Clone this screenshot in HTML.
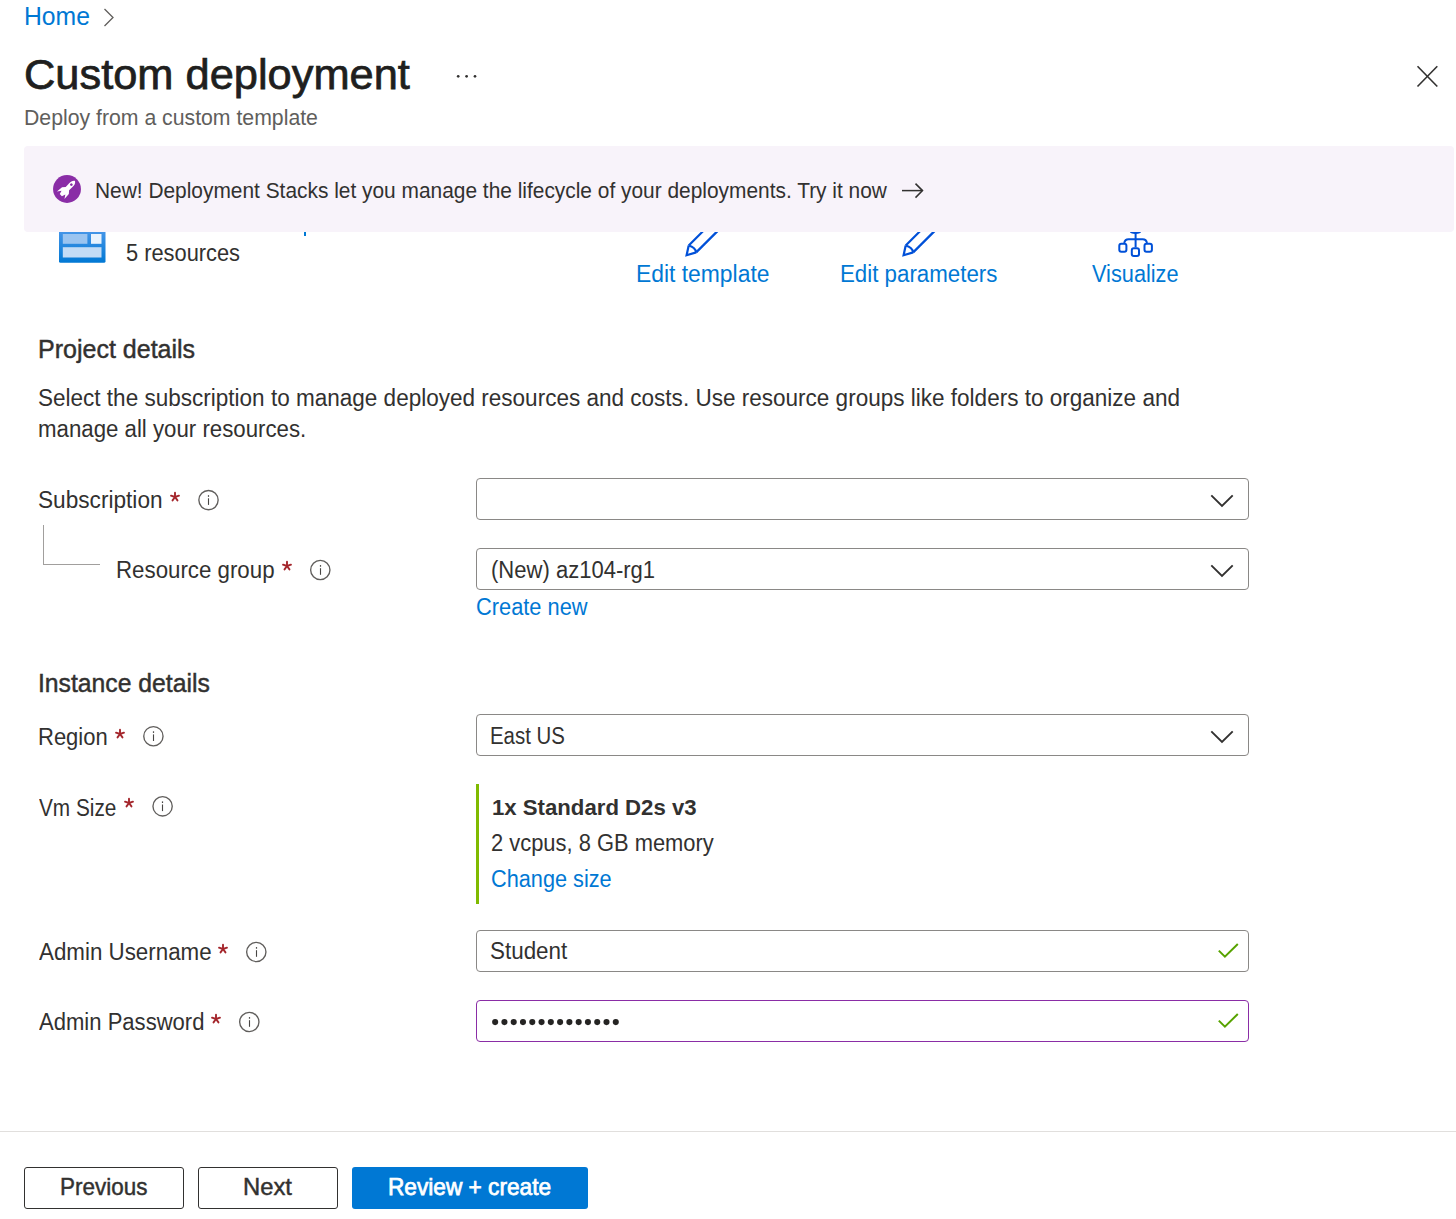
<!DOCTYPE html>
<html><head><meta charset="utf-8"><title>Custom deployment</title>
<style>
html,body{margin:0;padding:0;background:#fff;width:1456px;height:1219px;overflow:hidden;position:relative;font-family:"Liberation Sans",sans-serif;}
.t{position:absolute;white-space:nowrap;line-height:1;transform-origin:0 0;}
.ic{position:absolute;overflow:visible;}
.box{position:absolute;box-sizing:border-box;border:1px solid #8a8886;border-radius:4px;background:#fff;}
.btn{position:absolute;box-sizing:border-box;border:1px solid #323130;border-radius:3px;background:#fff;}
</style></head><body>
<!-- breadcrumb chevron -->
<svg class="ic" style="left:100px;top:5px" width="18" height="24" viewBox="0 0 18 24"><polyline points="4.5,4 13,12.5 4.5,21" fill="none" stroke="#605e5c" stroke-width="1.3"/></svg>
<!-- ellipsis -->
<svg class="ic" style="left:454px;top:70px" width="26" height="12" viewBox="0 0 26 12"><circle cx="4.2" cy="6.3" r="1.35" fill="#323130"/><circle cx="12.6" cy="6.3" r="1.35" fill="#323130"/><circle cx="21" cy="6.3" r="1.35" fill="#323130"/></svg>
<!-- close -->
<svg class="ic" style="left:1412px;top:61px" width="30" height="30" viewBox="0 0 30 30"><line x1="5.5" y1="5.3" x2="25.3" y2="25.5" stroke="#323130" stroke-width="1.6"/><line x1="25.3" y1="5.3" x2="5.5" y2="25.5" stroke="#323130" stroke-width="1.6"/></svg>

<!-- content behind banner -->
<div style="position:absolute;left:304px;top:232px;width:2.2px;height:3.8px;background:#0078d4"></div>
<svg class="ic" style="left:59px;top:220px" width="47" height="43" viewBox="0 0 47 43">
<defs><linearGradient id="resgrad" x1="0" y1="0" x2="0" y2="1"><stop offset="0" stop-color="#5ea0ef"/><stop offset="1" stop-color="#0078d4"/></linearGradient></defs>
<rect x="0" y="0" width="46.5" height="42.8" rx="1.6" fill="url(#resgrad)"/>
<rect x="3.8" y="14" width="24.6" height="9.8" fill="#9ac4f0"/>
<rect x="32" y="14" width="10.5" height="9.8" fill="#e9f3fd"/>
<rect x="3.8" y="27.2" width="38.7" height="10.3" fill="#c3dcf6"/>
</svg>
<!-- pencils -->
<svg class="ic" style="left:681px;top:214px" width="50" height="46" viewBox="0 0 50 46"><g fill="none" stroke="#0050d8" stroke-width="2.2" stroke-linejoin="miter">
<path d="M7.7,31.5 L36,3.2 M15.2,38.4 L43.5,10.1"/><path d="M7.7,31.5 L5.6,41.2 L15.2,38.4"/><path d="M7.7,31.5 Q14.3,33.2 15.2,38.4"/></g></svg>
<svg class="ic" style="left:898px;top:214px" width="50" height="46" viewBox="0 0 50 46"><g fill="none" stroke="#0050d8" stroke-width="2.2" stroke-linejoin="miter">
<path d="M7.7,31.5 L36,3.2 M15.2,38.4 L43.5,10.1"/><path d="M7.7,31.5 L5.6,41.2 L15.2,38.4"/><path d="M7.7,31.5 Q14.3,33.2 15.2,38.4"/></g></svg>
<!-- visualize -->
<svg class="ic" style="left:1112px;top:222px" width="48" height="40" viewBox="0 0 48 40"><path d="M17.6,9.6 L29.3,9.6 Q29,12 23.5,12.1 Q18,12 17.6,9.6 Z" fill="#0050d8"/><g fill="none" stroke="#0050d8" stroke-width="2" stroke-linejoin="round">
<path d="M23.6,11 L23.6,25.4"/><path d="M12.2,21 Q13,17.3 16.5,17.3 L30.7,17.3 Q34.2,17.3 35,21"/>
<rect x="7.3" y="21.8" width="7.1" height="7.9" rx="2"/><rect x="32.5" y="21.8" width="7.4" height="7.9" rx="2"/><rect x="19.8" y="26.2" width="7.2" height="7.8" rx="2"/></g></svg>

<!-- banner -->
<div style="position:absolute;left:24px;top:146px;width:1430px;height:86px;background:#f8f3fa;border-radius:4px;"></div>
<svg class="ic" style="left:53px;top:175px" width="28" height="28" viewBox="0 0 28 28"><circle cx="14" cy="14" r="13.95" fill="#8a2da6"/>
<g transform="translate(13,15) rotate(45)"><path d="M0,-12.8 C1.9,-11.5 2.6,-9.5 2.5,-7 L2.4,-2 L4.8,0.8 L5.3,7.5 L2.7,3.6 L1.5,7.3 L-1.5,7.3 L-2.7,3.6 L-5.3,7.5 L-4.8,0.8 L-2.4,-2 L-2.5,-7 C-2.6,-9.5 -1.9,-11.5 0,-12.8 Z" fill="#fff"/><circle cx="0" cy="-7.6" r="1.35" fill="#8a2da6"/></g></svg>
<svg class="ic" style="left:900px;top:180px" width="26" height="20" viewBox="0 0 26 20"><g fill="none" stroke="#323130" stroke-width="1.5"><path d="M2,10.6 L22.5,10.6"/><path d="M15.5,3.6 L22.5,10.6 L15.5,17.6"/></g></svg>

<!-- tree line -->
<div style="position:absolute;left:43px;top:525px;width:1px;height:40px;background:#a19f9d"></div>
<div style="position:absolute;left:43px;top:564px;width:57px;height:1px;background:#a19f9d"></div>

<!-- inputs -->
<div class="box" style="left:476px;top:478px;width:773px;height:42px"></div>
<div class="box" style="left:476px;top:548px;width:773px;height:42px"></div>
<div class="box" style="left:476px;top:714px;width:773px;height:42px"></div>
<div style="position:absolute;left:476px;top:784px;width:3px;height:120px;background:#7fba00"></div>
<div class="box" style="left:476px;top:930px;width:773px;height:42px"></div>
<div class="box" style="left:476px;top:1000px;width:773px;height:42px;border-color:#8a2da6"></div>
<svg class="ic" style="left:488px;top:1014px" width="140" height="16" viewBox="0 0 140 16"><circle cx="7.15" cy="8.1" r="3.05" fill="#252423"/><circle cx="16.43" cy="8.1" r="3.05" fill="#252423"/><circle cx="25.71" cy="8.1" r="3.05" fill="#252423"/><circle cx="34.99" cy="8.1" r="3.05" fill="#252423"/><circle cx="44.27" cy="8.1" r="3.05" fill="#252423"/><circle cx="53.55" cy="8.1" r="3.05" fill="#252423"/><circle cx="62.83" cy="8.1" r="3.05" fill="#252423"/><circle cx="72.11" cy="8.1" r="3.05" fill="#252423"/><circle cx="81.39" cy="8.1" r="3.05" fill="#252423"/><circle cx="90.67" cy="8.1" r="3.05" fill="#252423"/><circle cx="99.95" cy="8.1" r="3.05" fill="#252423"/><circle cx="109.23" cy="8.1" r="3.05" fill="#252423"/><circle cx="118.51" cy="8.1" r="3.05" fill="#252423"/><circle cx="127.79" cy="8.1" r="3.05" fill="#252423"/></svg>

<!-- footer -->
<div style="position:absolute;left:0;top:1131px;width:1456px;height:1px;background:#e1dfdd"></div>
<div class="btn" style="left:24px;top:1167px;width:160px;height:42px"></div>
<div class="btn" style="left:198px;top:1167px;width:140px;height:42px"></div>
<div style="position:absolute;left:352px;top:1167px;width:236px;height:42px;background:#0078d4;border-radius:3px"></div>

<svg class="ic" style="left:197px;top:489px" width="22" height="22" viewBox="0 0 22 22"><circle cx="11.50" cy="11.10" r="9.65" fill="none" stroke="#605e5c" stroke-width="1.35"/><rect x="10.90" y="6.20" width="1.2" height="1.6" fill="#484644"/><rect x="10.95" y="9.30" width="1.1" height="6.6" fill="#484644"/></svg><svg class="ic" style="left:309px;top:559px" width="22" height="22" viewBox="0 0 22 22"><circle cx="11.30" cy="11.00" r="9.65" fill="none" stroke="#605e5c" stroke-width="1.35"/><rect x="10.90" y="6.10" width="1.2" height="1.6" fill="#484644"/><rect x="10.95" y="9.20" width="1.1" height="6.6" fill="#484644"/></svg><svg class="ic" style="left:142px;top:725px" width="22" height="22" viewBox="0 0 22 22"><circle cx="11.40" cy="11.20" r="9.65" fill="none" stroke="#605e5c" stroke-width="1.35"/><rect x="10.90" y="6.30" width="1.2" height="1.6" fill="#484644"/><rect x="10.95" y="9.40" width="1.1" height="6.6" fill="#484644"/></svg><svg class="ic" style="left:151px;top:795px" width="22" height="22" viewBox="0 0 22 22"><circle cx="11.60" cy="11.30" r="9.65" fill="none" stroke="#605e5c" stroke-width="1.35"/><rect x="10.90" y="6.40" width="1.2" height="1.6" fill="#484644"/><rect x="10.95" y="9.50" width="1.1" height="6.6" fill="#484644"/></svg><svg class="ic" style="left:245px;top:941px" width="22" height="22" viewBox="0 0 22 22"><circle cx="11.30" cy="11.00" r="9.65" fill="none" stroke="#605e5c" stroke-width="1.35"/><rect x="10.90" y="6.10" width="1.2" height="1.6" fill="#484644"/><rect x="10.95" y="9.20" width="1.1" height="6.6" fill="#484644"/></svg><svg class="ic" style="left:238px;top:1011px" width="22" height="22" viewBox="0 0 22 22"><circle cx="11.30" cy="11.00" r="9.65" fill="none" stroke="#605e5c" stroke-width="1.35"/><rect x="10.90" y="6.10" width="1.2" height="1.6" fill="#484644"/><rect x="10.95" y="9.20" width="1.1" height="6.6" fill="#484644"/></svg><svg class="ic" style="left:167.0px;top:488.5px" width="16" height="16" viewBox="0 0 16 16"><line x1="8" y1="8" x2="8.00" y2="3.80" stroke="#a4262c" stroke-width="1.9" stroke-linecap="round"/><line x1="8" y1="8" x2="11.99" y2="6.70" stroke="#a4262c" stroke-width="1.9" stroke-linecap="round"/><line x1="8" y1="8" x2="10.47" y2="11.40" stroke="#a4262c" stroke-width="1.9" stroke-linecap="round"/><line x1="8" y1="8" x2="5.53" y2="11.40" stroke="#a4262c" stroke-width="1.9" stroke-linecap="round"/><line x1="8" y1="8" x2="4.01" y2="6.70" stroke="#a4262c" stroke-width="1.9" stroke-linecap="round"/></svg><svg class="ic" style="left:279.0px;top:558.0px" width="16" height="16" viewBox="0 0 16 16"><line x1="8" y1="8" x2="8.00" y2="3.80" stroke="#a4262c" stroke-width="1.9" stroke-linecap="round"/><line x1="8" y1="8" x2="11.99" y2="6.70" stroke="#a4262c" stroke-width="1.9" stroke-linecap="round"/><line x1="8" y1="8" x2="10.47" y2="11.40" stroke="#a4262c" stroke-width="1.9" stroke-linecap="round"/><line x1="8" y1="8" x2="5.53" y2="11.40" stroke="#a4262c" stroke-width="1.9" stroke-linecap="round"/><line x1="8" y1="8" x2="4.01" y2="6.70" stroke="#a4262c" stroke-width="1.9" stroke-linecap="round"/></svg><svg class="ic" style="left:112.0px;top:725.6px" width="16" height="16" viewBox="0 0 16 16"><line x1="8" y1="8" x2="8.00" y2="3.80" stroke="#a4262c" stroke-width="1.9" stroke-linecap="round"/><line x1="8" y1="8" x2="11.99" y2="6.70" stroke="#a4262c" stroke-width="1.9" stroke-linecap="round"/><line x1="8" y1="8" x2="10.47" y2="11.40" stroke="#a4262c" stroke-width="1.9" stroke-linecap="round"/><line x1="8" y1="8" x2="5.53" y2="11.40" stroke="#a4262c" stroke-width="1.9" stroke-linecap="round"/><line x1="8" y1="8" x2="4.01" y2="6.70" stroke="#a4262c" stroke-width="1.9" stroke-linecap="round"/></svg><svg class="ic" style="left:121.1px;top:795.4px" width="16" height="16" viewBox="0 0 16 16"><line x1="8" y1="8" x2="8.00" y2="3.80" stroke="#a4262c" stroke-width="1.9" stroke-linecap="round"/><line x1="8" y1="8" x2="11.99" y2="6.70" stroke="#a4262c" stroke-width="1.9" stroke-linecap="round"/><line x1="8" y1="8" x2="10.47" y2="11.40" stroke="#a4262c" stroke-width="1.9" stroke-linecap="round"/><line x1="8" y1="8" x2="5.53" y2="11.40" stroke="#a4262c" stroke-width="1.9" stroke-linecap="round"/><line x1="8" y1="8" x2="4.01" y2="6.70" stroke="#a4262c" stroke-width="1.9" stroke-linecap="round"/></svg><svg class="ic" style="left:215.0px;top:940.5px" width="16" height="16" viewBox="0 0 16 16"><line x1="8" y1="8" x2="8.00" y2="3.80" stroke="#a4262c" stroke-width="1.9" stroke-linecap="round"/><line x1="8" y1="8" x2="11.99" y2="6.70" stroke="#a4262c" stroke-width="1.9" stroke-linecap="round"/><line x1="8" y1="8" x2="10.47" y2="11.40" stroke="#a4262c" stroke-width="1.9" stroke-linecap="round"/><line x1="8" y1="8" x2="5.53" y2="11.40" stroke="#a4262c" stroke-width="1.9" stroke-linecap="round"/><line x1="8" y1="8" x2="4.01" y2="6.70" stroke="#a4262c" stroke-width="1.9" stroke-linecap="round"/></svg><svg class="ic" style="left:207.8px;top:1010.5px" width="16" height="16" viewBox="0 0 16 16"><line x1="8" y1="8" x2="8.00" y2="3.80" stroke="#a4262c" stroke-width="1.9" stroke-linecap="round"/><line x1="8" y1="8" x2="11.99" y2="6.70" stroke="#a4262c" stroke-width="1.9" stroke-linecap="round"/><line x1="8" y1="8" x2="10.47" y2="11.40" stroke="#a4262c" stroke-width="1.9" stroke-linecap="round"/><line x1="8" y1="8" x2="5.53" y2="11.40" stroke="#a4262c" stroke-width="1.9" stroke-linecap="round"/><line x1="8" y1="8" x2="4.01" y2="6.70" stroke="#a4262c" stroke-width="1.9" stroke-linecap="round"/></svg><svg class="ic" style="left:1210px;top:488.5px" width="24" height="24" viewBox="0 0 24 24"><polyline points="1.3,6.3 12,17 22.7,6.3" fill="none" stroke="#323130" stroke-width="1.9"/></svg><svg class="ic" style="left:1210px;top:558.5px" width="24" height="24" viewBox="0 0 24 24"><polyline points="1.3,6.3 12,17 22.7,6.3" fill="none" stroke="#323130" stroke-width="1.9"/></svg><svg class="ic" style="left:1210px;top:724.5px" width="24" height="24" viewBox="0 0 24 24"><polyline points="1.3,6.3 12,17 22.7,6.3" fill="none" stroke="#323130" stroke-width="1.9"/></svg><svg class="ic" style="left:1217.5px;top:942.9px" width="22" height="16" viewBox="0 0 22 16"><polyline points="0.8,7.6 6.9,13.6 19.8,1" fill="none" stroke="#57a300" stroke-width="2"/></svg><svg class="ic" style="left:1217.5px;top:1013.2px" width="22" height="16" viewBox="0 0 22 16"><polyline points="0.8,7.6 6.9,13.6 19.8,1" fill="none" stroke="#57a300" stroke-width="2"/></svg>
<div class="t" id="home" style="left:23.96px;top:4.41px;font-size:25.5px;font-weight:400;color:#0078d4;transform:scaleX(0.9693);">Home</div>
<div class="t" id="title" style="left:23.66px;top:52.55px;font-size:43.3px;font-weight:400;color:#201f1e;transform:scaleX(1.0022);-webkit-text-stroke:0.75px #201f1e;">Custom deployment</div>
<div class="t" id="sub" style="left:23.77px;top:107.38px;font-size:22.0px;font-weight:400;color:#605e5c;transform:scaleX(0.9654);">Deploy from a custom template</div>
<div class="t" id="banner" style="left:94.96px;top:181.00px;font-size:21.5px;font-weight:400;color:#323130;transform:scaleX(0.9717);">New! Deployment Stacks let you manage the lifecycle of your deployments. Try it now</div>
<div class="t" id="res" style="left:126.05px;top:242.23px;font-size:23.0px;font-weight:400;color:#323130;transform:scaleX(0.9488);">5 resources</div>
<div class="t" id="et" style="left:636.01px;top:263.13px;font-size:23.0px;font-weight:400;color:#0078d4;transform:scaleX(0.9941);">Edit template</div>
<div class="t" id="ep" style="left:840.47px;top:263.33px;font-size:23.0px;font-weight:400;color:#0078d4;transform:scaleX(0.9693);">Edit parameters</div>
<div class="t" id="vis" style="left:1092.41px;top:262.53px;font-size:23.0px;font-weight:400;color:#0078d4;transform:scaleX(0.9447);">Visualize</div>
<div class="t" id="pd" style="left:37.64px;top:336.74px;font-size:25.0px;font-weight:400;color:#323130;transform:scaleX(1.0007);-webkit-text-stroke:0.45px #323130;">Project details</div>
<div class="t" id="p1" style="left:37.93px;top:387.33px;font-size:23.0px;font-weight:400;color:#323130;transform:scaleX(0.9794);">Select the subscription to manage deployed resources and costs. Use resource groups like folders to organize and</div>
<div class="t" id="p2" style="left:37.94px;top:417.83px;font-size:23.0px;font-weight:400;color:#323130;transform:scaleX(0.9670);">manage all your resources.</div>
<div class="t" id="sub2" style="left:37.82px;top:489.03px;font-size:23.0px;font-weight:400;color:#323130;transform:scaleX(0.9841);">Subscription</div>
<div class="t" id="rg" style="left:116.45px;top:559.23px;font-size:23.0px;font-weight:400;color:#323130;transform:scaleX(0.9688);">Resource group</div>
<div class="t" id="new" style="left:490.75px;top:558.53px;font-size:23.0px;font-weight:400;color:#323130;transform:scaleX(0.9581);">(New) az104-rg1</div>
<div class="t" id="cn" style="left:475.97px;top:595.83px;font-size:23.0px;font-weight:400;color:#0078d4;transform:scaleX(0.9481);">Create new</div>
<div class="t" id="id" style="left:37.91px;top:671.34px;font-size:25.0px;font-weight:400;color:#323130;transform:scaleX(0.9892);-webkit-text-stroke:0.45px #323130;">Instance details</div>
<div class="t" id="reg" style="left:38.00px;top:726.43px;font-size:23.0px;font-weight:400;color:#323130;transform:scaleX(0.9565);">Region</div>
<div class="t" id="eus" style="left:490.22px;top:725.43px;font-size:23.0px;font-weight:400;color:#323130;transform:scaleX(0.8879);">East US</div>
<div class="t" id="vm" style="left:38.92px;top:796.73px;font-size:23.0px;font-weight:400;color:#323130;transform:scaleX(0.9043);">Vm Size</div>
<div class="t" id="std" style="left:491.92px;top:797.35px;font-size:22.5px;font-weight:700;color:#323130;transform:scaleX(0.9855);">1x Standard D2s v3</div>
<div class="t" id="vc" style="left:491.05px;top:832.13px;font-size:23.0px;font-weight:400;color:#323130;transform:scaleX(0.9523);">2 vcpus, 8 GB memory</div>
<div class="t" id="cs" style="left:491.06px;top:868.33px;font-size:23.0px;font-weight:400;color:#0078d4;transform:scaleX(0.9436);">Change size</div>
<div class="t" id="au" style="left:38.91px;top:941.33px;font-size:23.0px;font-weight:400;color:#323130;transform:scaleX(0.9715);">Admin Username</div>
<div class="t" id="stu" style="left:490.42px;top:939.63px;font-size:23.0px;font-weight:400;color:#323130;transform:scaleX(0.9746);">Student</div>
<div class="t" id="ap" style="left:38.91px;top:1011.33px;font-size:23.0px;font-weight:400;color:#323130;transform:scaleX(0.9588);">Admin Password</div>
<div class="t" id="prev" style="left:59.56px;top:1174.55px;font-size:23.8px;font-weight:400;color:#323130;transform:scaleX(0.9444);-webkit-text-stroke:0.45px #323130;">Previous</div>
<div class="t" id="next" style="left:242.74px;top:1174.55px;font-size:23.8px;font-weight:400;color:#323130;transform:scaleX(1.0012);-webkit-text-stroke:0.45px #323130;">Next</div>
<div class="t" id="rc" style="left:388.16px;top:1175.45px;font-size:23.8px;font-weight:400;color:#ffffff;transform:scaleX(0.9522);-webkit-text-stroke:0.75px #ffffff;">Review + create</div>
</body></html>
